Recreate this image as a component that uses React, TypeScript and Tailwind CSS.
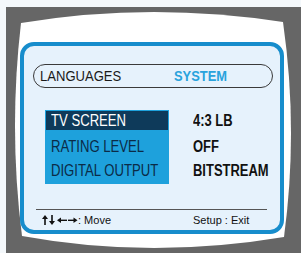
const font = { fontFamily: '"Liberation Sans", Arial, sans-serif' };

function TvShape() {
  return (
    <svg
      className="absolute inset-0 h-full w-full"
      viewBox="6 7 295 246"
      preserveAspectRatio="none"
    >
      <path
        d="M21 23 Q150 1.5 283 22 Q298.5 130 284 237 Q150 259.5 22 236 Q8.5 130 21 23 Z"
        fill="#ffffff"
      />
    </svg>
  );
}

function Arrows() {
  return (
    <svg width="36" height="10" viewBox="0 0 36 10" className="shrink-0">
      <g fill="#111">
        {/* up */}
        <rect x="2.2" y="3" width="1.6" height="7" />
        <path d="M0 4 L3 0 L6 4 Z" />
        {/* down */}
        <rect x="9.2" y="0" width="1.6" height="7" />
        <path d="M7 6 L10 10 L13 6 Z" />
        {/* left */}
        <rect x="18" y="4.6" width="7" height="1.4" />
        <path d="M15 5.3 L19 2.6 L19 8 Z" />
        {/* right */}
        <rect x="26" y="4.6" width="7" height="1.4" />
        <path d="M35.5 5.3 L31.5 2.6 L31.5 8 Z" />
      </g>
    </svg>
  );
}

function MenuRow({ label, value, active }: { label: string; value: string; active?: boolean }) {
  return (
    <div className="flex h-[24px] items-start">
      <div className="w-[124px] px-[1px]">
        <div
          className={`flex items-center pl-[5px] text-[16px] ${
            active ? "h-[19px] bg-[#0e3a5a] text-white" : "h-[24px] text-[#0b2b47]"
          }`}
        >
          <span className="inline-block origin-left scale-x-[0.82] whitespace-nowrap">{label}</span>
        </div>
      </div>
      <div
        className={`ml-[24px] flex items-center text-[16px] font-bold text-[#111] ${
          active ? "h-[19px]" : "h-[24px]"
        }`}
      >
        <span className="inline-block origin-left scale-x-[0.81] whitespace-nowrap">{value}</span>
      </div>
    </div>
  );
}

export default function App() {
  return (
    <div className="h-[253px] w-[301px] bg-[#f4f8fb] pl-[6px] pt-[7px]" style={font}>
      <div className="relative h-full w-full overflow-hidden bg-[#666666]">
        <TvShape />
        <div className="relative ml-[14px] mt-[35px] flex h-[192px] w-[264px] flex-col rounded-[14px] border-[4px] border-[#178dcc] bg-[#e6f2fc]">
          <div className="ml-[9px] mt-[18px] flex h-[24px] w-[240px] items-center rounded-full border border-[#3a3a3a] pl-[6px]">
            <span className="w-[134px] text-[15px] text-[#1a1a1a]">
              <span className="inline-block origin-left scale-x-[0.87] whitespace-nowrap">LANGUAGES</span>
            </span>
            <span className="text-[15px] font-bold text-[#29a3dc]">
              <span className="inline-block origin-left scale-x-[0.86] whitespace-nowrap">SYSTEM</span>
            </span>
          </div>

          <div className="relative ml-[21px] mt-[22px] h-[74px]">
            <div className="absolute left-0 top-0 h-[74px] w-[124px] bg-[#1ea1dc]" />
            <div className="relative pt-[1px]">
              <MenuRow label="TV SCREEN" value="4:3 LB" active />
              <MenuRow label="RATING LEVEL" value="OFF" />
              <MenuRow label="DIGITAL OUTPUT" value="BITSTREAM" />
            </div>
          </div>

          <div className="ml-[12px] mr-[13px] mt-[25px] h-[1px] bg-[#555555]" />
          <div className="flex h-[20px] items-center pl-[18px] text-[11px] text-[#111]">
            <span className="flex w-[151px] items-center">
              <Arrows />
              <span>: Move</span>
            </span>
            <span>Setup : Exit</span>
          </div>
        </div>
      </div>
    </div>
  );
}
